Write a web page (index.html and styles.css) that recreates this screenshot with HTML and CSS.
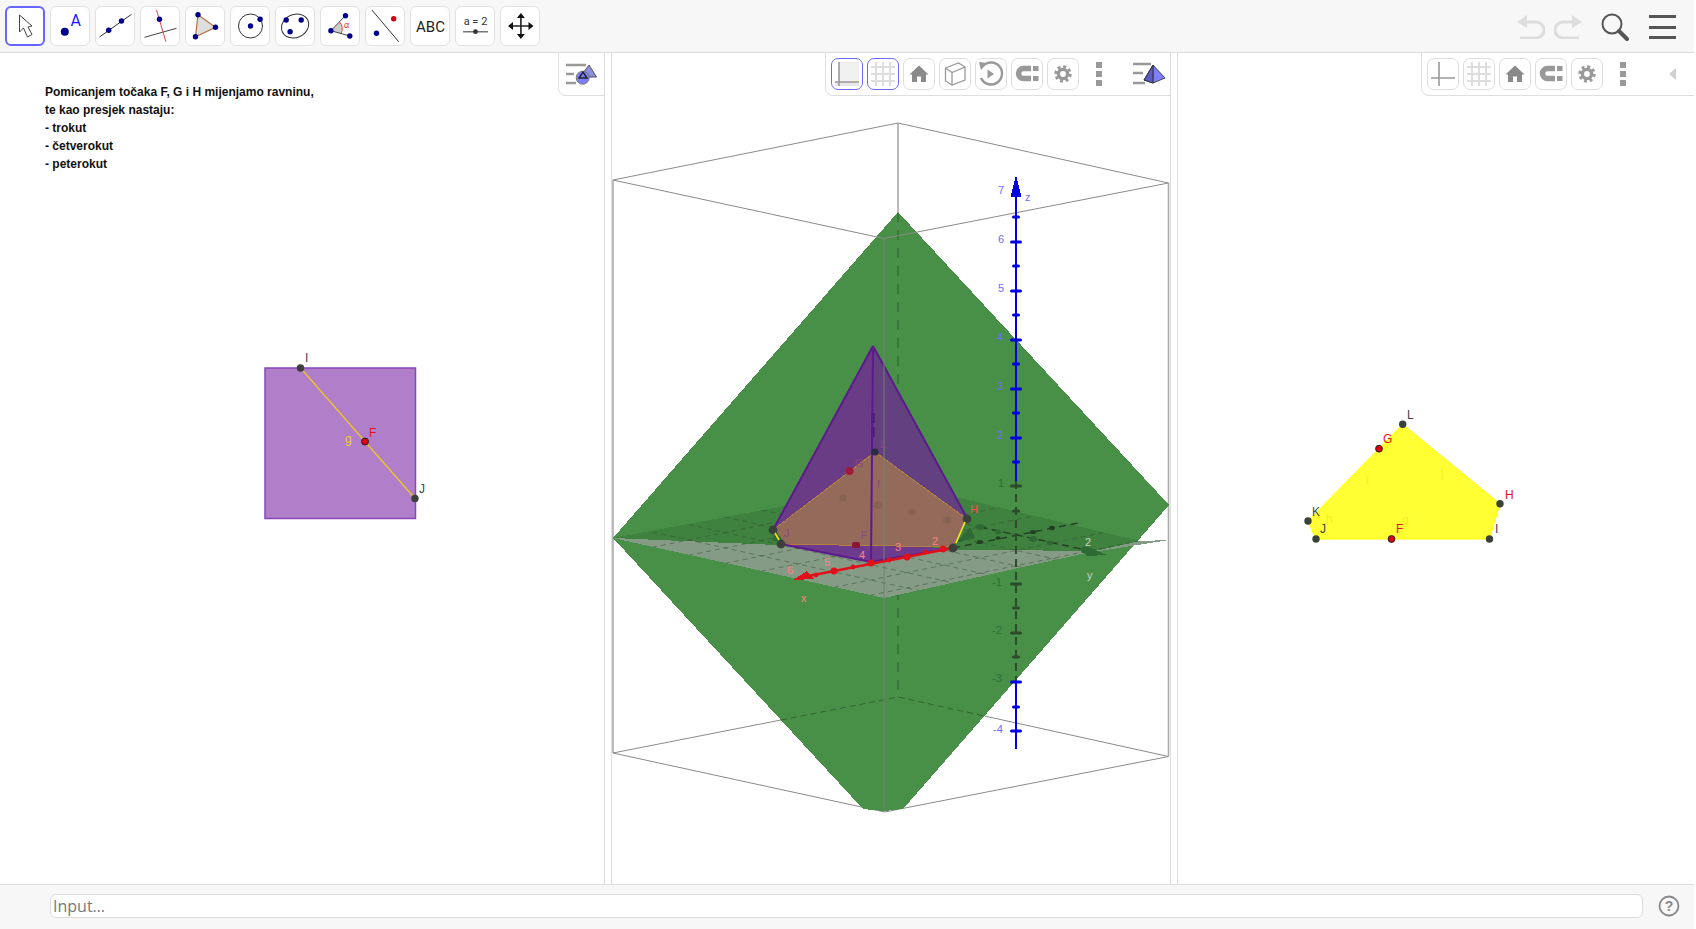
FILE: index.html
```html
<!DOCTYPE html>
<html lang="hr">
<head>
<meta charset="utf-8">
<title>GeoGebra</title>
<link rel="stylesheet" href="styles.css">
</head>
<body>
<svg class="defs" width="0" height="0" aria-hidden="true">
  <symbol id="home" viewBox="0 0 32 32"><path d="M16 7.5 L25.5 16.5 H23 V24 H18 V18.5 H14 V24 H9 V16.5 H6.5 Z" fill="#8a8a8a"/></symbol>
  <symbol id="magnet" viewBox="0 0 32 32"><path d="M20 10.5 H12.5 a5 5 0 0 0 0 10 H20" fill="none" stroke="#999" stroke-width="5.5"/><rect x="22" y="8" width="5.5" height="5" fill="#999"/><rect x="22" y="18" width="5.5" height="5" fill="#999"/></symbol>
  <symbol id="gear" viewBox="0 0 32 32"><circle cx="16" cy="16" r="4.6" fill="none" stroke="#999" stroke-width="3.4"/><circle cx="16" cy="16" r="7.3" fill="none" stroke="#999" stroke-width="2.8" stroke-dasharray="3 2.73"/></symbol>
  <symbol id="grid" viewBox="0 0 32 32"><path d="M9 4 V28 M16 4 V28 M23 4 V28 M4 9 H28 M4 16 H28 M4 23 H28" stroke="#ddd" stroke-width="2" fill="none"/></symbol>
</svg>

<div class="app">
  <header class="toolbar">
    <div class="tools">
      <div class="tool tool-active"><svg viewBox="0 0 39 40"><path d="M14 9 L14 26 L18 22 L22 31 L26.5 28.5 L22.5 21 L26.5 20 Z" fill="#fff" stroke="#444" stroke-width="1" stroke-linejoin="round"/></svg></div>
      <div class="tool"><svg viewBox="0 0 39 40"><circle cx="14.3" cy="25.7" r="4" fill="#00008c"/><text x="20" y="20" class="ico-a">A</text></svg></div>
      <div class="tool"><svg viewBox="0 0 39 40"><path d="M4 31 L36 8.3" stroke="#333" stroke-width="1"/><circle cx="13.2" cy="24.3" r="2.7" fill="#00008c"/><circle cx="26" cy="15" r="2.7" fill="#00008c"/></svg></div>
      <div class="tool"><svg viewBox="0 0 39 40"><path d="M4 31.3 L36 22.3" stroke="#444" stroke-width="1"/><path d="M16 4 L25.4 35.7" stroke="#f04040" stroke-width="1"/><circle cx="19" cy="13.3" r="2.7" fill="#00008c"/></svg></div>
      <div class="tool"><svg viewBox="0 0 39 40"><path d="M12.5 8.7 L30 21.3 L10 30.7 Z" fill="#ddd" stroke="#b5713f" stroke-width="1.2"/><circle cx="12.5" cy="8.7" r="2.7" fill="#00008c"/><circle cx="30" cy="21.3" r="2.7" fill="#00008c"/><circle cx="10" cy="30.7" r="2.7" fill="#00008c"/></svg></div>
      <div class="tool"><svg viewBox="0 0 39 40"><circle cx="20" cy="20" r="12" fill="none" stroke="#333" stroke-width="1"/><circle cx="20" cy="20" r="2.7" fill="#00008c"/><circle cx="29.6" cy="13.3" r="2.7" fill="#00008c"/></svg></div>
      <div class="tool"><svg viewBox="0 0 39 40"><ellipse cx="19.6" cy="20" rx="14" ry="11.5" transform="rotate(-25 19.6 20)" fill="none" stroke="#333" stroke-width="1"/><circle cx="10.7" cy="14" r="2.7" fill="#00008c"/><circle cx="25.7" cy="14" r="2.7" fill="#00008c"/><circle cx="14.6" cy="25.7" r="2.7" fill="#00008c"/></svg></div>
      <div class="tool"><svg viewBox="0 0 39 40"><path d="M10.4 24.7 L19 16 A10 10 0 0 1 20.5 27.5 Z" fill="#ccc"/><path d="M19 16 A10 10 0 0 1 20.5 27.5" fill="none" stroke="#f04040"/><path d="M25 9.7 L10.4 24.7 L29.3 30" fill="none" stroke="#444"/><circle cx="25" cy="9.7" r="2.7" fill="#00008c"/><circle cx="10.4" cy="24.7" r="2.7" fill="#00008c"/><circle cx="29.3" cy="30" r="2.7" fill="#00008c"/><text x="23.5" y="21.5" class="ico-alpha">α</text></svg></div>
      <div class="tool"><svg viewBox="0 0 39 40"><path d="M6.4 4 L33.2 35.7" stroke="#333" stroke-width="1"/><circle cx="28.2" cy="12.7" r="2.7" fill="#d00010"/><circle cx="11" cy="27.3" r="2.7" fill="#00008c"/></svg></div>
      <div class="tool"><svg viewBox="0 0 39 40"><text x="20" y="25.5" class="ico-abc">ABC</text></svg></div>
      <div class="tool"><svg viewBox="0 0 39 40"><text x="20" y="19" class="ico-slider">a = 2</text><path d="M7.5 25.7 H32.5" stroke="#777" stroke-width="1.5"/><circle cx="20" cy="25.7" r="2.4" fill="#333"/></svg></div>
      <div class="tool"><svg viewBox="0 0 39 40"><path d="M20.4 10 V30 M10 20 H31" stroke="#222" stroke-width="1.6"/><path d="M20.4 7 L24.4 12 H16.4 Z M20.4 33 L24.4 28 H16.4 Z M7.5 20 L12.5 16 V24 Z M33 20 L28 16 V24 Z" fill="#111"/></svg></div>
    </div>
    <div class="top-actions">
      <svg class="act-undo" viewBox="0 0 28 24"><path d="M0 7 L10 0 V13 Z" fill="#ddd"/><path d="M9 7 H19 A8 8 0 0 1 19 23 H3" fill="none" stroke="#ddd" stroke-width="3"/></svg>
      <svg class="act-undo" viewBox="0 0 28 24"><path d="M28 7 L18 0 V13 Z" fill="#ddd"/><path d="M19 7 H9 A8 8 0 0 0 9 23 H25" fill="none" stroke="#ddd" stroke-width="3"/></svg>
      <svg class="act-search" viewBox="0 0 28 28"><circle cx="11" cy="11" r="9.5" fill="none" stroke="#555" stroke-width="2"/><path d="M18 18 L26 26" stroke="#555" stroke-width="4" stroke-linecap="round"/></svg>
      <div class="act-menu"><span></span><span></span><span></span></div>
    </div>
  </header>

  <main class="panels">
    <section class="panel panel-algebra">
      <svg class="canvas" viewBox="0 53 604 831">
        <text class="note" x="45" y="96">Pomicanjem točaka F, G i H mijenjamo ravninu,</text>
        <text class="note" x="45" y="114">te kao presjek nastaju:</text>
        <text class="note" x="45" y="132">- trokut</text>
        <text class="note" x="45" y="150">- četverokut</text>
        <text class="note" x="45" y="168">- peterokut</text>
        <rect x="265" y="368" width="150.5" height="150.5" fill="#b17fc9" stroke="#8b45b5" stroke-width="1.5"/>
        <path d="M300.5 368 L415 498.5" stroke="#f0c820" stroke-width="1.2"/>
        <circle cx="300.5" cy="368" r="3.7" fill="#3a403a"/>
        <circle cx="415" cy="498.5" r="3.7" fill="#3a403a"/>
        <circle cx="365" cy="441.5" r="3.5" fill="#e00010" stroke="#222" stroke-width="1"/>
        <text class="lbl lbl-dark" x="305" y="362">I</text>
        <text class="lbl lbl-dark" x="419" y="493">J</text>
        <text class="lbl lbl-red" x="369" y="437">F</text>
        <text class="lbl lbl-gold" x="345" y="443">g</text>
      </svg>
      <div class="stylebar stylebar-left">
        <svg class="persp" viewBox="0 0 32 32"><path d="M0 7 H20 M0 16 H8 M0 25 H10" stroke="#999" stroke-width="2.5"/><path d="M23 7 L30.5 19 H14 Z" fill="#8a8fe0" stroke="#555"/><circle cx="16.7" cy="19.7" r="6.5" fill="#8080ff" stroke="#777"/><path d="M17 14 L21 20 H13 Z" fill="none" stroke="#223" stroke-width="1.5"/></svg>
      </div>
    </section>

    <div class="splitter"></div>

    <section class="panel panel-3d">
      <svg class="canvas scene" viewBox="612 53 558 831">
        <defs>
          <clipPath id="plane"><polygon points="613,538 884,598 1140,541 960,498 790,505"/></clipPath>
        </defs>
        <!-- box, behind the solid -->
        <path d="M613 180 L898 123 L1168.5 183" class="box"/>
        <path d="M613 180 V753 M1168.5 183 V756 M898 123 V212" class="box-edge"/>
        <path d="M613 753 L781 720 M984.5 716 L1168.5 756.5 M613 753 L884.5 812 L1168.5 756.5" class="box"/>
        <!-- green polyhedron -->
        <polygon points="898,212 1169,505 903,809 884,811 863,809 613,538" fill="#488f48"/>
        <path d="M898 212 V697" class="hidden-line"/>
        <path d="M781 720 L898 697 L984.5 716" class="hidden-line2"/>
        <path d="M613 180 L884 238.5 L1168.5 183" class="box"/>
        <!-- horizontal plane -->
        <polygon points="613,538 790,505 960,498 1140,541 1100,551 870,549" fill="#3f813f"/>
        <polygon points="613,538 884,598 1140,541 1169,540 1100,551 870,549" fill="#869b86"/>
        <g clip-path="url(#plane)" class="gridlines">
          <path d="M652.5 532 L921 591 M689 524.6 L957.5 583.8 M725 517 L994 576 M761.7 509.8 L1030.3 569 M798 502.4 L1067 561.6 M834.5 495 L1103 554"/>
          <path d="M870 595.4 L1139.6 540.6 M834 587.4 L1103.3 532.6 M761 571.4 L1031 516.6 M725 563.4 L994.4 508.6 M688.4 555.4 L958 500.6 M652 547.4 L921.5 492.6"/>
        </g>
        <!-- pyramid -->
        <polygon points="873,346 773,530 871,562" fill="#6a3c85"/>
        <polygon points="873,346 871,562 967,518" fill="#63407f"/>
        <polygon points="781,544 953,548 871,562" fill="#6c3b8e"/>
        <polygon points="875,452 967,519 953,547 781,544 773,530" fill="#946b5b" stroke="#b37f3e" stroke-width="1"/>
        <path d="M873 413 V440" class="pyr-hidden"/>
        <path d="M873 346 L773 530 M873 346 L967 518 M873 346 L871 562 M773 530 L781 544 L871 562 L953 548" class="pyr-edge"/>
        <path d="M884 238.5 V812" class="box-in"/>
        <!-- axes below the plane -->
        <path d="M953 548 L1078 523" class="hidden-axis"/>
        <path d="M980 527 L1100 553" class="hidden-axis"/>
        <g fill="#2f6a34">
          <ellipse cx="980" cy="527" rx="4" ry="3"/><ellipse cx="998" cy="532" rx="3" ry="2.4"/><ellipse cx="1033" cy="539" rx="4" ry="3"/><ellipse cx="1050" cy="543" rx="3" ry="2.4"/><ellipse cx="1085" cy="550" rx="4" ry="3.5"/>
          <polygon points="1086,546 1107,555 1086,556"/>
          <polygon points="956,543 970,527 975,538"/>
          <polygon points="772,541 776,531 783,541"/>
        </g>
        <g fill="#243f24">
          <ellipse cx="980" cy="542" rx="3" ry="2"/><ellipse cx="998" cy="538" rx="2.4" ry="1.8"/><ellipse cx="1033" cy="532" rx="3" ry="2"/><ellipse cx="1052" cy="528" rx="3" ry="2.2"/>
        </g>
        <g fill="#876452">
          <ellipse cx="843" cy="498" rx="3.5" ry="3.5"/><ellipse cx="878" cy="505" rx="4.5" ry="4"/><ellipse cx="912" cy="512" rx="4" ry="3.5"/><ellipse cx="947" cy="520" rx="4" ry="3.5"/>
        </g>
        <!-- x axis -->
        <path d="M798 578 L953 548" stroke="#e2101a" stroke-width="2.4"/>
        <polygon points="793,580 807,571 814,579" fill="#e2101a"/>
        <g fill="#e2101a">
          <circle cx="834" cy="571" r="3.4"/><circle cx="871" cy="563" r="3.4"/><circle cx="907" cy="557" r="3.4"/><circle cx="943" cy="549" r="3.4"/>
          <circle cx="816" cy="575" r="2.4"/><circle cx="853" cy="567" r="2.4"/><circle cx="889" cy="560" r="2.4"/><circle cx="925" cy="552" r="2.4"/>
        </g>
        <!-- z axis -->
        <path d="M1016 190 V481 M1016 682 V749" class="z-line"/>
        <path d="M1016 481 V682" class="z-hidden"/>
        <polygon points="1016,175 1010.5,197 1021.5,197" fill="#0000e0"/>
        <path d="M1011.5 242 H1020.5 M1011.5 291 H1020.5 M1011.5 340 H1020.5 M1011.5 389 H1020.5 M1011.5 438 H1020.5 M1011.5 682 H1020.5 M1011.5 731 H1020.5" class="z-major"/>
        <path d="M1013.5 217 H1018.5 M1013.5 266 H1018.5 M1013.5 315 H1018.5 M1013.5 364 H1018.5 M1013.5 413 H1018.5 M1013.5 462 H1018.5 M1013.5 707 H1018.5" class="z-major"/>
        <path d="M1011.5 486 H1020.5 M1011.5 584 H1020.5 M1011.5 633 H1020.5" class="z-dim"/>
        <path d="M1013.5 511 H1018.5 M1013.5 608 H1018.5 M1013.5 657 H1018.5" class="z-dim"/>
        <!-- points -->
        <g fill="#3a403a">
          <circle cx="773" cy="530" r="4.4"/><circle cx="781" cy="544" r="4.4"/><circle cx="967" cy="519" r="4.4"/><circle cx="953" cy="548" r="4.4"/><circle cx="875" cy="452" r="3.6" fill="#2a2a40"/>
        </g>
        <path d="M775 533 L779 540 M965 522 L956 543" stroke="#f0e820" stroke-width="1.6"/>
        <circle cx="849.5" cy="471" r="4" fill="#a01b3a"/>
        <rect x="852" y="542" width="8" height="6" rx="2" fill="#8e1530"/>
        <!-- labels -->
        <g class="lbl3d lbl-blue">
          <text x="998" y="194">7</text><text x="998" y="243">6</text><text x="998" y="292">5</text><text x="997" y="341">4</text><text x="997" y="390">3</text><text x="997" y="439">2</text><text x="993" y="733">-4</text><text x="1025" y="201">z</text>
        </g>
        <g class="lbl3d lbl-dim">
          <text x="998" y="487">1</text><text x="992" y="586">-1</text><text x="992" y="634">-2</text><text x="992" y="682">-3</text>
        </g>
        <g class="lbl3d lbl-pink">
          <text x="787" y="574">6</text><text x="824" y="566">5</text><text x="859" y="559">4</text><text x="895" y="551">3</text><text x="932" y="545">2</text><text x="801" y="602">x</text><text class="lbl-h" x="970" y="513">H</text>
        </g>
        <g class="lbl3d lbl-mute">
          <text x="855" y="467">G</text><text x="861" y="539">F</text><text x="784" y="537">J</text><text x="880" y="448">L</text><text x="877" y="488">f</text>
        </g>
        <g class="lbl3d lbl-pale">
          <text x="1085" y="546">2</text><text x="1087" y="579">y</text>
        </g>
      </svg>
      <div class="stylebar stylebar-mid">
        <div class="sbtn sbtn-on"><svg viewBox="0 0 32 32"><rect x="8" y="4" width="20" height="20" fill="#f0f0f0"/><rect x="4" y="24" width="24" height="4" fill="#e8e8e8"/><path d="M8 4 V28 M4 24 H28" stroke="#999" stroke-width="1.6"/></svg></div>
        <div class="sbtn sbtn-on"><svg viewBox="0 0 32 32"><use href="#grid"/></svg></div>
        <div class="sbtn"><svg viewBox="0 0 32 32"><use href="#home"/></svg></div>
        <div class="sbtn"><svg viewBox="0 0 32 32"><path d="M6.5 10 L19.5 5 L26 9 V22 L13 27 L6.5 23 Z M6.5 10 L13 14.5 L26 9 M13 14.5 V27" fill="none" stroke="#999" stroke-width="1.3"/></svg></div>
        <div class="sbtn"><svg viewBox="0 0 32 32"><path d="M8 8 A11 11 0 1 1 6 20" fill="none" stroke="#999" stroke-width="2.4"/><path d="M4 4 L12 5 L6 12 Z" fill="#999"/><path d="M12.5 11.5 L19 16 L12.5 20.5 Z" fill="#999"/></svg></div>
        <div class="sbtn"><svg viewBox="0 0 32 32"><use href="#magnet"/></svg></div>
        <div class="sbtn"><svg viewBox="0 0 32 32"><use href="#gear"/></svg></div>
        <div class="dots"><span></span><span></span><span></span></div>
        <svg class="persp persp-mid" viewBox="0 0 32 32"><path d="M0 6 H18 M0 15 H10 M0 25 H12" stroke="#999" stroke-width="2.5"/><path d="M20 7 L32 20 L20 25 L11 22 Z" fill="#8080ff" stroke="#444"/><path d="M20 7 V25" stroke="#444"/><path d="M20 7 L11 22 L20 25 Z" fill="#5a5ac8" stroke="#333"/></svg>
      </div>
    </section>

    <div class="splitter"></div>

    <section class="panel panel-2d">
      <svg class="canvas" viewBox="1178 53 516 831">
        <polygon points="1402.7,424.3 1500,503.7 1489.5,539 1316,539 1308,521" fill="#ffff33" stroke="#ffff00"/>
        <g fill="#3a403a">
          <circle cx="1402.7" cy="424.3" r="3.7"/><circle cx="1500" cy="503.7" r="3.7"/><circle cx="1489.5" cy="539" r="3.7"/><circle cx="1316" cy="539" r="3.7"/><circle cx="1308" cy="521" r="3.7"/>
        </g>
        <circle cx="1379" cy="448.7" r="3.4" fill="#e00010" stroke="#222"/>
        <circle cx="1391.5" cy="539" r="3.4" fill="#e00010" stroke="#222"/>
        <text class="lbl lbl-dark" x="1407" y="419">L</text>
        <text class="lbl lbl-red" x="1383" y="443">G</text>
        <text class="lbl lbl-red" x="1505" y="499">H</text>
        <text class="lbl lbl-dark" x="1312" y="516">K</text>
        <text class="lbl lbl-dark" x="1320" y="533">J</text>
        <text class="lbl lbl-red" x="1396" y="533">F</text>
        <text class="lbl lbl-dark" x="1495" y="533">I</text>
        <text class="lbl lbl-faint" x="1366" y="484">i</text>
        <text class="lbl lbl-faint" x="1441" y="477">j</text>
        <text class="lbl lbl-faint" x="1326" y="523">h</text>
        <text class="lbl lbl-faint" x="1402" y="524">g</text>
      </svg>
      <div class="stylebar stylebar-right">
        <div class="sbtn"><svg viewBox="0 0 32 32"><path d="M12 4 V28 M4 20 H28" stroke="#999" stroke-width="1.6"/></svg></div>
        <div class="sbtn"><svg viewBox="0 0 32 32"><use href="#grid"/></svg></div>
        <div class="sbtn"><svg viewBox="0 0 32 32"><use href="#home"/></svg></div>
        <div class="sbtn"><svg viewBox="0 0 32 32"><use href="#magnet"/></svg></div>
        <div class="sbtn"><svg viewBox="0 0 32 32"><use href="#gear"/></svg></div>
        <div class="dots"><span></span><span></span><span></span></div>
        <div class="collapse"></div>
      </div>
    </section>
  </main>

  <footer class="inputbar">
    <div class="inputbox">Input…</div>
    <svg class="help" viewBox="0 0 22 22"><circle cx="11" cy="11" r="9.5" fill="none" stroke="#888" stroke-width="1.8"/><text x="11" y="16" class="help-q">?</text></svg>
  </footer>
</div>
</body>
</html>
```
FILE: styles.css
```css
* { box-sizing: border-box; }
html, body { margin: 0; padding: 0; background: #fff; }
body { font-family: "Liberation Sans", Arial, sans-serif; overflow: hidden; }
.defs { position: absolute; }

.app { width: 1694px; height: 929px; display: flex; flex-direction: column; }

/* top toolbar */
.toolbar {
  height: 53px; flex: none; background: #f7f7f7; border-bottom: 1px solid #dcdcdc;
  display: flex; justify-content: space-between; align-items: flex-start;
}
.tools { display: flex; gap: 5px; padding: 6px 0 0 5px; }
.tool { width: 40px; height: 40px; background: #fff; border: 1px solid #e2e2e2; border-radius: 6px; overflow: hidden; }
.tool svg { display: block; width: 40px; height: 40px; margin: -1px; }
.tool-active { border: 2px solid #6666ff; }
.tool-active svg { margin: -2px; }
.ico-a { font: 16px Roboto, sans-serif; fill: #1a1af5; }
.ico-alpha { font: 9px "Liberation Sans", sans-serif; fill: #e03030; }
.ico-abc { font: 15px Roboto, sans-serif; fill: #222; text-anchor: middle; }
.ico-slider { font: 11px Roboto, sans-serif; fill: #333; text-anchor: middle; }

.top-actions { display: flex; align-items: flex-start; padding: 13px 18px 0 0; }
.act-undo { width: 28px; height: 24px; margin: 2px 9px 0 0; display: block; }
.act-search { width: 28px; height: 28px; margin: 0 20px 0 10px; display: block; }
.act-menu { width: 27px; height: 24px; margin-top: 2px; display: flex; flex-direction: column; justify-content: space-between; }
.act-menu span { display: block; height: 3px; background: #555; }

/* panels */
.panels { flex: 1; display: flex; min-height: 0; }
.panel { position: relative; height: 100%; overflow: hidden; background: #fff; }
.panel-algebra { width: 605px; border-right: 1px solid #dcdcdc; }
.panel-3d { width: 558px; }
.panel-2d { flex: 1; border-left: 1px solid #dcdcdc; }
.splitter { width: 7px; flex: none; background: #fff; border-right: 1px solid #dcdcdc; }
.panel-3d + .splitter { border-left: 1px solid #dcdcdc; border-right: 0; }
.canvas { display: block; width: 100%; height: 100%; }
.panel-algebra .canvas { width: 604px; }
.panel-2d .canvas { width: 516px; }

.note { font: bold 12px "Liberation Sans", Arial, sans-serif; fill: #111; }
.lbl { font: 12px "Liberation Sans", Arial, sans-serif; }
.lbl-dark { fill: #444; }
.lbl-red { fill: #e8101a; }
.lbl-gold { fill: #f0d020; }
.lbl-faint { fill: #f0f020; }

/* 3d scene */
.scene polygon { shape-rendering: crispEdges; }
.box { fill: none; stroke: #8a8a8a; stroke-width: 1; }
.box-edge { fill: none; stroke: #aaa; stroke-width: 1.6; }
.box-in { fill: none; stroke: #777f77; stroke-width: 1; }
.hidden-line { fill: none; stroke: #2f6a2f; stroke-width: 1.2; stroke-dasharray: 10 8; }
.hidden-line2 { fill: none; stroke: #356435; stroke-width: 1; stroke-dasharray: 6 4; }
.gridlines path { fill: none; stroke: #2f4f2f; stroke-opacity: .5; stroke-width: 1; stroke-dasharray: 5 4; }
.pyr-edge { fill: none; stroke: #5c1a8c; stroke-width: 2; stroke-linejoin: round; }
.pyr-hidden { stroke: #3a2060; stroke-width: 3; stroke-dasharray: 10 4; }
.hidden-axis { stroke: #243f24; stroke-width: 1.4; stroke-dasharray: 7 5; }
.z-line { stroke: #0000e0; stroke-width: 2; fill: none; }
.z-hidden { stroke: #2c4a2c; stroke-width: 2; stroke-dasharray: 8 5; }
.z-major { stroke: #0000e0; stroke-width: 3; stroke-linecap: round; fill: none; }
.z-dim { stroke: #2c4a2c; stroke-width: 3; stroke-linecap: round; fill: none; }
.lbl3d { font: 11px "Liberation Sans", Arial, sans-serif; }
.lbl-blue { fill: #6e6eff; }
.lbl-dim { fill: #2f6f3a; }
.lbl-pink { fill: #ff8080; }
.lbl-h { fill: #ff5050; }
.lbl-mute { fill: #8a4a80; }
.lbl-pale { fill: #c8d4c8; }

/* style bars */
.stylebar {
  position: absolute; top: 0; right: 0; height: 43px; background: #fff;
  border-left: 1px solid #e0e0e0; border-bottom: 1px solid #dedede; border-bottom-left-radius: 8px;
  display: flex; gap: 4px; padding: 5px 0 0 4px;
}
.stylebar-left { width: 46px; }
.stylebar-left .persp { margin-left: 3px; }
.stylebar-mid { width: 345px; padding-left: 5px; }
.stylebar-right { width: 273px; padding-left: 5px; }
.sbtn { width: 32px; height: 32px; border: 1px solid #dedede; border-radius: 7px; background: #fff; overflow: hidden; }
.sbtn svg { display: block; width: 32px; height: 32px; margin: -1px; }
.sbtn-on { border-color: #6a6aff; }
.dots { width: 32px; height: 32px; display: flex; flex-direction: column; align-items: center; gap: 3.5px; padding-top: 4px; }
.dots span { display: block; width: 6px; height: 5.5px; background: #999; }
.persp { width: 32px; height: 32px; display: block; flex: none; }
.persp-mid { margin-left: 14px; }
.collapse { width: 0; height: 0; margin: 10px 0 0 26px; border-style: solid; border-width: 6px 7px 6px 0; border-color: transparent #d0d0d0 transparent transparent; }

/* input bar */
.inputbar {
  height: 45px; flex: none; background: #f7f7f7; border-top: 1px solid #dcdcdc;
  display: flex; align-items: flex-start; padding: 9px 0 0 50px;
}
.inputbox {
  width: 1593px; height: 24px; background: #fff; border: 1px solid #dcdcdc; border-radius: 6px;
  font: 16px/22px "Open Sans", "Liberation Sans", sans-serif; color: #777; padding-left: 2px;
}
.help { width: 22px; height: 22px; margin: 1px 0 0 15px; display: block; }
.help-q { font: bold 14px "Liberation Sans", sans-serif; fill: #888; text-anchor: middle; }
```
